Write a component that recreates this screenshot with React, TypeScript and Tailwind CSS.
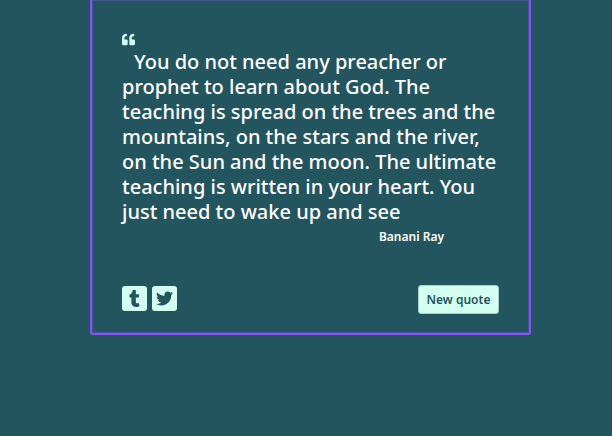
import React from "react";
import { FaQuoteLeft, FaTumblr, FaTwitter } from "react-icons/fa";

export default function App() {
  return (
    <main className="flex min-h-screen flex-col items-center bg-[#23555f] pr-[81px] pl-[90px] font-['Noto_Sans','Open_Sans',sans-serif]">
      <section id="quote-box" className="w-full max-w-[442px] rounded-b-[3px] border-x-2 border-b-2 border-[#8a4fff] px-[30px] pt-[33px] pb-[19px] shadow-[inset_0_0_0_1px_#425593]">
        <blockquote className="text-[20px] leading-[25px] font-[530] text-white">
          <FaQuoteLeft className="mb-[3px] size-[13px] text-[#d2fff0]" />
          <p className="indent-3">
            You do not need any preacher or prophet to learn about God. The teaching is spread on the trees and the
            mountains, on the stars and the river, on the Sun and the moon. The ultimate teaching is written in your
            heart. You just need to wake up and see
          </p>
        </blockquote>
        <p className="mt-[3px] pr-[55px] text-right text-[12px] leading-5 font-semibold text-white">Banani Ray</p>
        <div className="mt-[38px] flex items-start justify-between">
          <div className="flex gap-[5px] pt-px">
            <a href="#tumblr" aria-label="Post to Tumblr" className="flex size-[25px] items-center justify-center rounded-[3px] bg-[#d2fff0] text-[#23555f]">
              <FaTumblr className="size-[17px]" />
            </a>
            <a href="#twitter" aria-label="Share on Twitter" className="flex size-[25px] items-center justify-center rounded-[3px] bg-[#d2fff0] text-[#23555f]">
              <FaTwitter className="size-[17px]" />
            </a>
          </div>
          <button type="button" className="h-[29px] w-[81px] rounded-[3px] border border-[#a3cfc6] bg-[#d2fff0] text-[12px] font-semibold text-[#23555f]">New quote</button>
        </div>
      </section>
    </main>
  );
}
